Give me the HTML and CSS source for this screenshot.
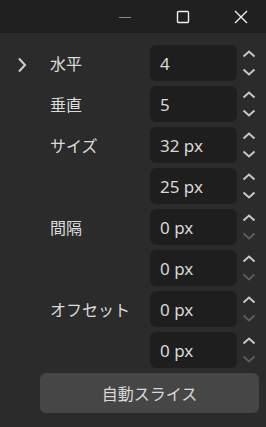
FILE: index.html
```html
<!doctype html>
<html lang="ja">
  <head>
    <meta charset="UTF-8" />
    <meta name="viewport" content="width=device-width, initial-scale=1.0" />
    <title>スライス</title>
    <link rel="stylesheet" href="styles.css">
  </head>
  <body>
    <div class="titlebar">
      <button class="win-btn" aria-label="最小化">
        <svg width="14" height="14" viewBox="0 0 14 14"><line x1="1" y1="7.5" x2="13" y2="7.5" stroke="#8a8a8a" stroke-width="1" /></svg>
      </button>
      <button class="win-btn" aria-label="最大化">
        <svg width="14" height="14" viewBox="0 0 14 14"><rect x="1.5" y="1.5" width="11" height="11" rx="1" fill="none" stroke="#f0f0f0" stroke-width="1.4" /></svg>
      </button>
      <button class="win-btn" aria-label="閉じる">
        <svg width="14" height="14" viewBox="0 0 14 14"><path d="M1 1 L13 13 M13 1 L1 13" stroke="#f0f0f0" stroke-width="1.4" /></svg>
      </button>
    </div>

    <div class="panel">
      <div class="row">
        <div class="expander">
          <svg width="10" height="16" viewBox="0 0 10 16"><path d="M2 1.5 L8 8 L2 14.5" fill="none" stroke="#d0d0d0" stroke-width="2" /></svg>
        </div>
        <div class="label">水平</div>
        <input class="field" type="text" value="4" />
        <div class="spin"></div>
      </div>
      <div class="row">
        <div class="expander"></div>
        <div class="label">垂直</div>
        <input class="field" type="text" value="5" />
        <div class="spin"></div>
      </div>
      <div class="row">
        <div class="expander"></div>
        <div class="label">サイズ</div>
        <input class="field" type="text" value="32 px" />
        <div class="spin"></div>
      </div>
      <div class="row">
        <div class="expander"></div>
        <div class="label"></div>
        <input class="field" type="text" value="25 px" />
        <div class="spin"></div>
      </div>
      <div class="row">
        <div class="expander"></div>
        <div class="label">間隔</div>
        <input class="field" type="text" value="0 px" />
        <div class="spin at-min"></div>
      </div>
      <div class="row">
        <div class="expander"></div>
        <div class="label"></div>
        <input class="field" type="text" value="0 px" />
        <div class="spin at-min"></div>
      </div>
      <div class="row">
        <div class="expander"></div>
        <div class="label">オフセット</div>
        <input class="field" type="text" value="0 px" />
        <div class="spin at-min"></div>
      </div>
      <div class="row">
        <div class="expander"></div>
        <div class="label"></div>
        <input class="field" type="text" value="0 px" />
        <div class="spin at-min"></div>
      </div>

      <button class="slice-btn">自動スライス</button>
    </div>

    <script>
      const ARROW_ON = "#c8c8c8";
      const ARROW_OFF = "#5c5c5c";

      document.querySelectorAll(".spin").forEach((spin) => {
        const downColor = spin.classList.contains("at-min") ? ARROW_OFF : ARROW_ON;
        spin.innerHTML = `
          <svg width="22" height="36" viewBox="0 0 22 36">
            <path d="M6.5 11.5 L12 6.5 L17.5 11.5" fill="none" stroke="${ARROW_ON}" stroke-width="2" />
            <path d="M6.5 24.5 L12 29.5 L17.5 24.5" fill="none" stroke="${downColor}" stroke-width="2" />
          </svg>`;
      });
    </script>
  </body>
</html>
```

FILE: styles.css
```css
body {
  margin: 0;
  background: #2b2b2b;
  font-family: "Noto Sans", "Noto Sans CJK JP", sans-serif;
  color: #dcdcdc;
  width: 266px;
  height: 427px;
  overflow: hidden;
}

.titlebar {
  height: 33px;
  background: #202020;
  display: flex;
  justify-content: flex-end;
  align-items: center;
  gap: 44px;
  padding-right: 18px;
}

.win-btn {
  width: 14px;
  height: 14px;
  padding: 0;
  border: none;
  background: none;
  display: flex;
}

.panel {
  padding-top: 12px;
}

.row {
  display: flex;
  align-items: center;
  height: 36px;
  margin-bottom: 5px;
}

.expander {
  width: 50px;
  box-sizing: border-box;
  padding: 4px 0 0 17px;
  display: flex;
}

.label {
  width: 100px;
  font-size: 16px;
  color: #dcdcdc;
}

.field {
  width: 87px;
  height: 36px;
  box-sizing: border-box;
  padding: 0 0 0 10px;
  border: none;
  border-radius: 6px;
  background: #1e1e1e;
  color: #d8d8d8;
  font-family: "Noto Sans", sans-serif;
  font-size: 17px;
  outline: none;
}

.spin {
  width: 22px;
  height: 36px;
  display: flex;
}

.slice-btn {
  display: block;
  margin: 0 0 0 40px;
  width: 219px;
  height: 40px;
  border: none;
  border-radius: 6px;
  background: #464646;
  color: #d8d8d8;
  font-family: "Noto Sans CJK JP", sans-serif;
  font-size: 16px;
}
```
